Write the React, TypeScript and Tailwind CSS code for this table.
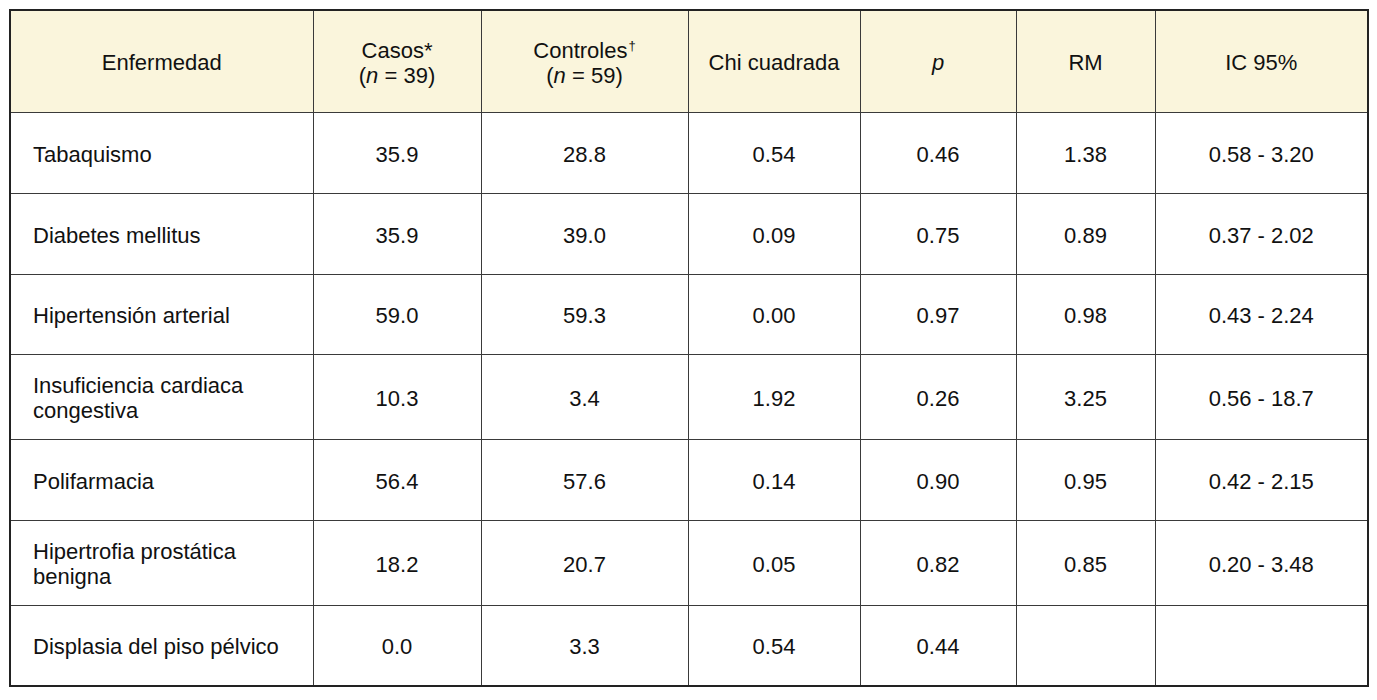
const rows = [
  { name: ["Tabaquismo"], casos: "35.9", controles: "28.8", chi: "0.54", p: "0.46", rm: "1.38", ic: "0.58 - 3.20", h: "h-[81px]" },
  { name: ["Diabetes mellitus"], casos: "35.9", controles: "39.0", chi: "0.09", p: "0.75", rm: "0.89", ic: "0.37 - 2.02", h: "h-[81px]" },
  { name: ["Hipertensión arterial"], casos: "59.0", controles: "59.3", chi: "0.00", p: "0.97", rm: "0.98", ic: "0.43 - 2.24", h: "h-[80px]" },
  { name: ["Insuficiencia cardiaca", "congestiva"], casos: "10.3", controles: "3.4", chi: "1.92", p: "0.26", rm: "3.25", ic: "0.56 - 18.7", h: "h-[85px]" },
  { name: ["Polifarmacia"], casos: "56.4", controles: "57.6", chi: "0.14", p: "0.90", rm: "0.95", ic: "0.42 - 2.15", h: "h-[81px]" },
  { name: ["Hipertrofia prostática", "benigna"], casos: "18.2", controles: "20.7", chi: "0.05", p: "0.82", rm: "0.85", ic: "0.20 - 3.48", h: "h-[85px]" },
  { name: ["Displasia del piso pélvico"], casos: "0.0", controles: "3.3", chi: "0.54", p: "0.44", rm: "", ic: "", h: "h-[81px]" },
];

const cell = "border border-[#3a3a3a] text-center align-middle px-0 pb-0 pt-[3px]";

export default function App() {
  return (
    <div className="w-[1377px] h-[700px] bg-white pt-[9px] pl-[9px] font-['Liberation_Sans',Arial,sans-serif] text-[22px] leading-[25px] text-[#111]">
      <table className="border-collapse border-2 border-[#222] table-fixed w-[1358px]">
        <colgroup>
          <col className="w-[303px]" />
          <col className="w-[168px]" />
          <col className="w-[207px]" />
          <col className="w-[172px]" />
          <col className="w-[156px]" />
          <col className="w-[139px]" />
          <col className="w-[213px]" />
        </colgroup>
        <thead>
          <tr className="h-[102px] bg-[#faf5dc]">
            <th className={`${cell} font-normal`}>Enfermedad</th>
            <th className={`${cell} font-normal`}>
              Casos*
              <br />(<i>n</i> = 39)
            </th>
            <th className={`${cell} font-normal`}>
              Controles<sup className="text-[13px] -top-[8px] ml-[1px]">†</sup>
              <br />(<i>n</i> = 59)
            </th>
            <th className={`${cell} font-normal`}>Chi cuadrada</th>
            <th className={`${cell} font-normal`}>
              <i>p</i>
            </th>
            <th className={`${cell} font-normal`}>RM</th>
            <th className={`${cell} font-normal`}>IC 95%</th>
          </tr>
        </thead>
        <tbody>
          {rows.map((r) => (
            <tr key={r.name.join(" ")} className={r.h}>
              <td className="border border-[#3a3a3a] text-left align-middle pl-[22px] pt-[3px]">
                {r.name.map((n, i) => (
                  <div key={i}>{n}</div>
                ))}
              </td>
              <td className={cell}>{r.casos}</td>
              <td className={cell}>{r.controles}</td>
              <td className={cell}>{r.chi}</td>
              <td className={cell}>{r.p}</td>
              <td className={cell}>{r.rm}</td>
              <td className={cell}>{r.ic}</td>
            </tr>
          ))}
        </tbody>
      </table>
    </div>
  );
}
